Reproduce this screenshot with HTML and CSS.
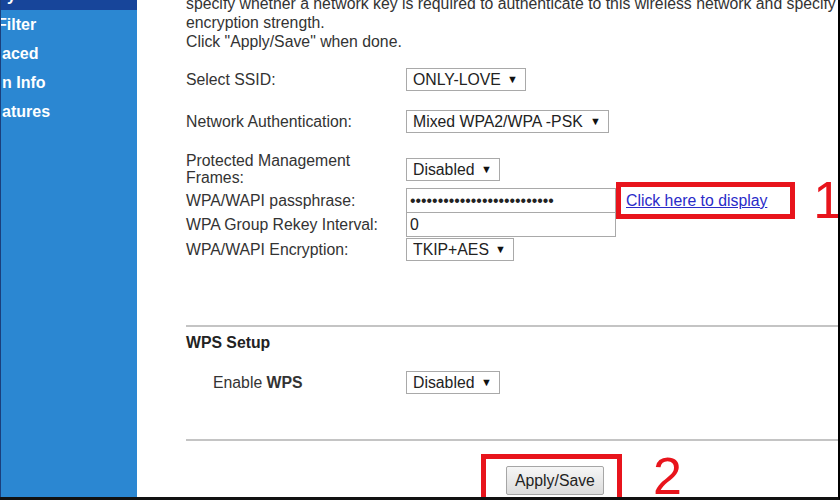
FILE: index.html
```html
<!DOCTYPE html>
<html lang="en">
<head>
    <meta charset="UTF-8">
    <title>Wireless -- Security</title>
    <link rel="stylesheet" href="styles.css">
</head>
<body>
    <div class="frame">
        <!-- menu de la izquierda, recortado -->
        <nav class="sidebar">
            <a href="#" class="nav-item active">y</a>
            <a href="#" class="nav-item cut">Filter</a>
            <a href="#" class="nav-item">aced</a>
            <a href="#" class="nav-item">n Info</a>
            <a href="#" class="nav-item">atures</a>
        </nav>

        <main class="content">
            <p class="intro">specify whether a network key is required to authenticate to this wireless network and specify<br>
                encryption strength.<br>
                Click "Apply/Save" when done.</p>

            <div class="field row-ssid">
                <label class="field-label" for="ssid">Select SSID:</label>
                <span class="dropdown"><select id="ssid"><option>ONLY-LOVE</option></select></span>
            </div>

            <div class="field row-auth">
                <label class="field-label" for="auth">Network Authentication:</label>
                <span class="dropdown"><select id="auth"><option>Mixed WPA2/WPA -PSK</option></select></span>
            </div>

            <div class="field row-pmf">
                <label class="field-label" for="pmf">Protected Management Frames:</label>
                <span class="dropdown"><select id="pmf"><option>Disabled</option></select></span>
            </div>

            <div class="field row-pass">
                <label class="field-label" for="pass">WPA/WAPI passphrase:</label>
                <input class="text-input" type="password" id="pass" value="abcdefghijklmnopqrstuvwxyz">
                <span class="mark mark-link"><a href="#" class="show-link">Click here to display</a></span>
                <span class="step step-1">1</span>
            </div>

            <div class="field row-rekey">
                <label class="field-label" for="rekey">WPA Group Rekey Interval:</label>
                <input class="text-input" type="text" id="rekey" value="0">
            </div>

            <div class="field row-enc">
                <label class="field-label" for="enc">WPA/WAPI Encryption:</label>
                <span class="dropdown"><select id="enc"><option>TKIP+AES</option></select></span>
            </div>

            <hr class="sep sep-wps">

            <h3 class="section-title">WPS Setup</h3>

            <div class="field row-wps">
                <label class="field-label indent" for="wps">Enable <b>WPS</b></label>
                <span class="dropdown"><select id="wps"><option>Disabled</option></select></span>
            </div>

            <hr class="sep sep-save">

            <div class="actions">
                <span class="mark mark-button"><button type="button" class="btn">Apply/Save</button></span>
                <span class="step step-2">2</span>
            </div>
        </main>
    </div>
</body>
</html>
```

FILE: styles.css
```css
/* Estilos de la pagina */
body {
    margin: 0;
    padding: 0;
    background: #fff;
    font-family: "Liberation Sans", Arial, sans-serif;
    overflow: hidden;
}

.frame {
    display: flex;
    width: 840px;
    height: 500px;
    box-sizing: border-box;
    border-right: 2px solid #000;
    border-bottom: 3px solid #111;
    overflow: hidden;
}

/* menu lateral */
.sidebar {
    width: 137px;
    flex: none;
    box-sizing: border-box;
    background-color: #2b87d2;
    border-left: 1px solid #1b3f7c;
    overflow: hidden;
}

.nav-item {
    display: block;
    height: 29px;
    line-height: 29px;
    padding-left: 1px;
    color: #fff;
    font-size: 16px;
    font-weight: bold;
    text-decoration: none;
    white-space: nowrap;
}

.nav-item.active {
    background-color: #17459a;
    margin-top: -19px;
    padding-left: 6px;
}

.nav-item.cut {
    text-indent: -5px;
}

/* contenido */
.content {
    flex: 1;
    padding-left: 49px;
    color: #333;
    font-size: 15.8px;
    overflow: hidden;
}

.intro {
    margin: -6px 0 0 0;
    line-height: 19px;
    white-space: nowrap;
}

.field {
    display: flex;
    align-items: center;
}

.field-label {
    width: 220px;
    flex: none;
    line-height: 17px;
}

.field-label.indent {
    padding-left: 27px;
    box-sizing: border-box;
}

.row-ssid { margin-top: 17px; height: 23px; }
.row-auth { margin-top: 19px; height: 23px; }
.row-pmf { margin-top: 19px; height: 34px; }
.row-pass { margin-top: 2px; height: 25px; }
.row-rekey { margin-top: -1px; height: 25px; }
.row-enc { margin-top: 1px; height: 23px; }
.row-wps { margin-top: 19px; height: 23px; }

.dropdown {
    position: relative;
    display: inline-block;
    flex: none;
}

.dropdown select {
    appearance: none;
    -webkit-appearance: none;
    height: 23px;
    margin: 0;
    padding: 0 24px 0 6px;
    border: 1px solid #a9a9a9;
    border-radius: 0;
    background: #fff;
    color: #222;
    font-family: inherit;
    font-size: 15.8px;
}

.dropdown::after {
    content: "\25BC";
    position: absolute;
    right: 8px;
    top: 5px;
    font-size: 11px;
    color: #111;
    pointer-events: none;
}

.text-input {
    width: 210px;
    height: 25px;
    flex: none;
    box-sizing: border-box;
    margin: 0;
    padding: 0 3px;
    border: 1px solid #a9a9a9;
    color: #222;
    font-family: inherit;
    font-size: 15.8px;
}

/* marcas rojas */
.mark {
    display: inline-block;
    flex: none;
    border: 5px solid #e8141c;
    white-space: nowrap;
}

.mark-link {
    margin: -6px 0;
    padding: 0 23px 0 5px;
    line-height: 27px;
}

.show-link {
    color: #2a2ac8;
    text-decoration: underline;
}

.step {
    flex: none;
    color: #e8141c;
    font-size: 52px;
    font-weight: normal;
}

.step-1 {
    margin-left: 18px;
    line-height: 25px;
}

.sep {
    margin: 0;
    border: 0;
    border-top: 2px solid #c4c4c4;
}

.sep-wps { margin-top: 64px; }
.sep-save { margin-top: 45px; }

.section-title {
    margin: 7px 0 0 0;
    font-size: 15.8px;
    line-height: 18px;
    color: #222;
}

.actions {
    display: flex;
    align-items: flex-start;
    margin-top: 13px;
    padding-left: 295px;
}

.mark-button {
    padding: 7px 13px 7px 20px;
}

.btn {
    display: block;
    height: 29px;
    padding: 0 8px;
    border: 1px solid #a6a6a6;
    border-radius: 2px;
    background: linear-gradient(#f6f6f6, #dcdcdc);
    color: #222;
    font-family: inherit;
    font-size: 15.8px;
}

.step-2 {
    margin-left: 31px;
    margin-top: -4px;
    line-height: 52px;
}
```
